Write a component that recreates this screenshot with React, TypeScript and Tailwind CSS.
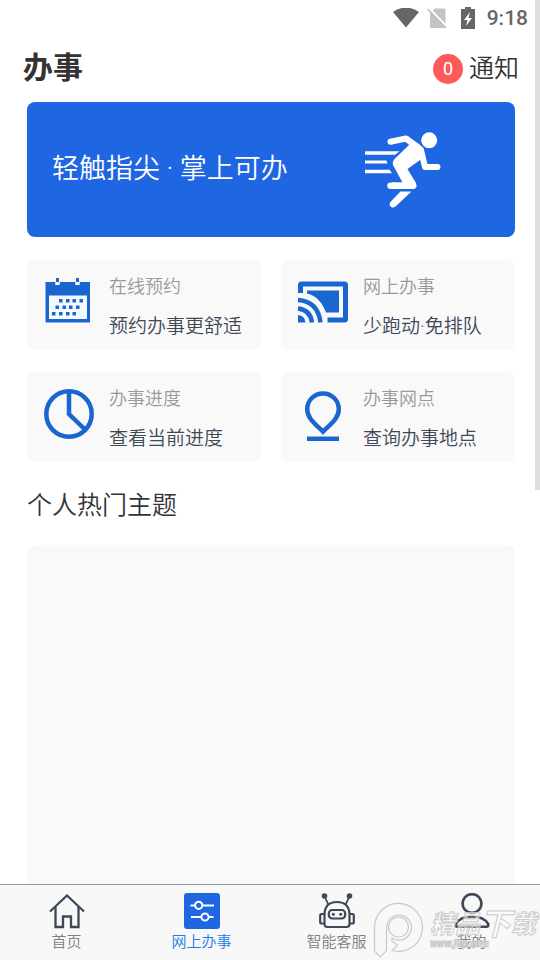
import React, { useState } from 'react';

interface Service {
  title: string;
  text: string;
  icon: React.ReactNode;
}

interface Tab {
  name: string;
  icon: React.ReactNode;
}

const CalendarIcon = () => (
  <svg viewBox="0 0 54 54" className="w-[54px] h-[54px]" fill="#1a66d0">
    <path d="M4.500 8h10v3h4V8h16v3h4V8h10.500v40.500h-44.500z" />
    <path d="M8 21.500h38v23.500H8z" fill="#f5faff" />
    <path d="M15 4h3v4h-3zM35 4h3v4h-3z" />
    <path d="M14.500 8h4v3h-4zM34.500 8h4v3h-4z" fill="#f5faff" />
    {[18, 25, 31.5, 38.5].map((x) => (
      <rect key={x} x={x} y="25" width="3.500" height="3.500" />
    ))}
    {[14.5, 21.5, 28, 35].map((x) => (
      <rect key={x} x={x} y="31.500" width="3.500" height="3.500" />
    ))}
    {[11, 18, 25, 31.5].map((x) => (
      <rect key={x} x={x} y="38" width="3.500" height="3.500" />
    ))}
  </svg>
);

const CastIcon = () => (
  <svg viewBox="0 0 54 54" className="w-[54px] h-[54px]" fill="#1a66d0">
    <path d="M3 19v-8q0-3.500 3.500-3.500h43q3.500 0 3.500 3.500v34q0 3.500-3.500 3.500H32.500v-5H48V12.500H8V19z" />
    <path d="M12 16.500h32v22H31C27 28 21.500 22 12 19.500z" />
    <g fill="none" stroke="#1a66d0" strokeWidth="4.500">
      <path d="M3 26Q23 27.500 25.500 48.500" />
      <path d="M3 34.500Q15.500 36 17 48.500" />
    </g>
    <path d="M3 41q7 .5 7.500 7.500H3z" />
  </svg>
);

const ProgressIcon = () => (
  <svg
    viewBox="0 0 54 54"
    className="w-[54px] h-[54px]"
    fill="none"
    stroke="#1a66d0"
    strokeWidth="4.500"
  >
    <circle cx="28" cy="28" r="22.700" />
    <path d="M28 5v23l16 15.500" />
  </svg>
);

const PlaceIcon = () => (
  <svg viewBox="0 0 54 54" className="w-[54px] h-[54px] overflow-visible" fill="none">
    <path
      d="M28 45.700C20 37.700 12.200 32.200 12.200 23.200a15.800 15.800 0 0 1 31.600 0C43.800 32.200 36 37.700 28 45.700z"
      stroke="#1a66d0"
      strokeWidth="4.500"
    />
    <path d="M12 50.500h32v4.500H12z" fill="#1a66d0" />
  </svg>
);

const RunnerIcon = () => (
  <svg
    viewBox="0 0 80 80"
    className="w-[80px] h-[80px]"
    fill="#fff"
    stroke="none"
    strokeLinecap="round"
    strokeLinejoin="round"
  >
    <circle cx="67.200" cy="10.300" r="8" />
    <path
      d="M28.500 11.800L44 8.500L59 20L63 37H75.500"
      fill="none"
      stroke="#fff"
      strokeWidth="6"
    />
    <path d="M45 6L57 14Q61.500 18 62.500 24V29.500L58 30L45.500 39L54 53Q56 59 50.500 59H30V52.500H40.500L31 35Q30 31.500 33 28.500L47 15z" />
    <path d="M28.500 55.700H50" fill="none" stroke="#fff" strokeWidth="6.500" />
    <path d="M38.500 61.500H49.500L33.500 76.500Q30.500 78.500 28.500 76.500Q26.500 74 28.800 71.500z" />
    <path d="M3 21.200H37.500L33 24.700H3zM3 30.500H24.500L25.500 33.500H3zM3 39.800H27.500L30 43.300H3z" />
  </svg>
);

const HomeIcon = () => (
  <svg
    viewBox="0 0 36 36"
    className="w-9 h-9"
    fill="none"
    stroke="#3e4857"
    strokeWidth="2.300"
  >
    <path d="M1 18.500L18 2.500L35 18.500" />
    <path d="M6.500 14v20h7.500V23.500h8V34h7.500V14" />
  </svg>
);

const ServiceIcon = () => (
  <svg viewBox="0 0 36 36" className="w-9 h-9" fill="none" stroke="#fff" strokeWidth="2">
    <rect width="36" height="36" rx="3" fill="#1f66e3" stroke="none" />
    <path d="M6.500 12.500H11M18.500 12.500H30M7 24H17M24.500 24H29.500" />
    <circle cx="14.700" cy="12.300" r="3.600" />
    <circle cx="21" cy="24" r="3.600" />
  </svg>
);

const RobotIcon = () => (
  <svg
    viewBox="0 0 36 36"
    className="w-9 h-9"
    fill="none"
    stroke="#3e4857"
    strokeWidth="2.200"
  >
    <path d="M5.500 3L9.500 12M30.500 3L26.500 12" strokeWidth="1.800" />
    <circle cx="5.500" cy="3" r="2.800" fill="#3e4857" stroke="none" />
    <circle cx="30.500" cy="3" r="2.800" fill="#3e4857" stroke="none" />
    <path d="M5.500 22Q5.500 9 18 9T30.500 22V31Q30.500 34 27.500 34H8.500Q5.500 34 5.500 31z" />
    <path d="M5.500 21H2.500Q1.200 21 1.200 22.500V29Q1.200 30.500 2.500 30.500H5.500M30.500 21H33.500Q34.800 21 34.800 22.500V29Q34.800 30.500 33.500 30.500H30.500" />
    <rect x="9.800" y="17" width="16.400" height="8.500" rx="3.500" />
    <circle cx="14.300" cy="21.300" r="1.500" fill="#3e4857" stroke="none" />
    <circle cx="21.700" cy="21.300" r="1.500" fill="#3e4857" stroke="none" />
  </svg>
);

const UserIcon = () => (
  <svg
    viewBox="0 0 36 36"
    className="w-9 h-9"
    fill="none"
    stroke="#3e4857"
    strokeWidth="2.600"
    strokeLinejoin="round"
  >
    <circle cx="18" cy="10.500" r="9.400" />
    <path d="M1.800 31C5 25.500 11 23.500 18 23.500S31 25.500 34.200 31Q34.800 33.700 32.500 33.700H3.500Q1.200 33.700 1.800 31z" />
  </svg>
);

const services: Service[] = [
  { title: '在线预约', text: '预约办事更舒适', icon: <CalendarIcon /> },
  { title: '网上办事', text: '少跑动·免排队', icon: <CastIcon /> },
  { title: '办事进度', text: '查看当前进度', icon: <ProgressIcon /> },
  { title: '办事网点', text: '查询办事地点', icon: <PlaceIcon /> },
];

const tabs: Tab[] = [
  { name: '首页', icon: <HomeIcon /> },
  { name: '网上办事', icon: <ServiceIcon /> },
  { name: '智能客服', icon: <RobotIcon /> },
  { name: '我的', icon: <UserIcon /> },
];

const StatusBar = () => (
  <div className="flex h-9 shrink-0 items-center justify-end pr-3 text-[#666]">
    <svg viewBox="0 0 26 20" className="mr-2 w-[26px] h-5" fill="#666">
      <path d="M0 4Q13-5 26 4L13 19.500z" />
    </svg>
    <svg viewBox="0 0 20 22" className="mr-3.5 w-5 h-[22px]">
      <path d="M8 1.500H17Q18.500 1.500 18.500 3V21H3V7z" fill="#c4c4c4" />
      <path d="M1 1L20 20" stroke="#fff" strokeWidth="3" />
      <path d="M.5 2L19 21" stroke="#bbb" strokeWidth="1.500" />
    </svg>
    <svg viewBox="0 0 14 22" className="mr-3 w-3.5 h-[22px]">
      <path d="M4 0h6v2h4v20H0V2h4z" fill="#666" />
      <path d="M9 5L3 13h3.500L5 19L11 11H7.500z" fill="#fff" />
    </svg>
    <span className="text-[21px] leading-6 font-medium">9:18</span>
  </div>
);

const Watermark = () => (
  <div className="pointer-events-none absolute right-0 bottom-0 flex h-[60px] w-[168px] font-['Noto_Sans_CJK_SC',sans-serif]">
    <svg
      viewBox="0 0 54 60"
      className="w-[54px] h-[60px] shrink-0"
      fill="none"
      stroke="#c9c9c9"
      strokeWidth="1.200"
    >
      <path d="M2.500 51V26.500A24 24 0 1 1 20 50.500L25.500 45L20 41V38A12.500 12.500 0 1 0 14.500 28V50.500L8.500 57z" />
      <circle cx="26.500" cy="27" r="10" />
    </svg>
    <div className="flex flex-1 flex-col pt-2 pl-1 italic">
      <span className="flex h-7 items-center whitespace-nowrap text-[25px] leading-7 font-bold text-white/50 [-webkit-text-stroke:1px_#ccc]">
        精品<span className="text-[31px]">下</span>载
      </span>
      <span className="font-[Roboto,sans-serif] text-[10px] leading-4 font-bold text-white/60 [-webkit-text-stroke:1px_#ccc]">
        www.j9p.com
      </span>
    </div>
  </div>
);

const App: React.FC = () => {
  const [active, setActive] = useState<string>('网上办事');

  return (
    <div className="relative flex h-screen flex-col overflow-hidden bg-white font-[Roboto,'Noto_Sans_CJK_SC_DemiLight','Noto_Sans_CJK_SC',sans-serif] font-[350] text-[#333]">
      <StatusBar />
      <header className="flex h-[66px] shrink-0 items-center justify-between pr-[21px] pb-px pl-[23px]">
        <h1 className="pb-0.5 font-[Roboto,'Noto_Sans_CJK_SC',sans-serif] text-[30px] leading-9 font-bold">
          办事
        </h1>
        <button className="flex items-center gap-1.5 text-[25px] leading-8">
          <span className="flex size-[30px] items-center justify-center rounded-full bg-[#ff5a5a] text-lg font-normal text-white">
            0
          </span>
          通知
        </button>
      </header>

      <main className="flex min-h-0 flex-1 flex-col pr-[25px] pl-[27px]">
        <button className="flex h-[135px] shrink-0 items-center justify-between rounded-lg bg-[#1f66e3] pr-[73px] pl-[25px] text-[27px] text-white">
          <span>轻触指尖 · 掌上可办</span>
          <RunnerIcon />
        </button>

        <div className="mt-[23px] grid shrink-0 grid-cols-2 gap-x-5 gap-y-[22px]">
          {services.map((item) => (
            <button
              key={item.title}
              className="flex h-[90px] items-start rounded-lg bg-[#f9f9f9] pt-3.5 pl-3.5 text-left"
            >
              {item.icon}
              <span className="ml-3.5 flex flex-col gap-3.5 pt-px">
                <span className="text-lg leading-6 text-[#999]">{item.title}</span>
                <span className="whitespace-nowrap text-[19px] leading-7 text-[#3e4857]">
                  {item.text}
                </span>
              </span>
            </button>
          ))}
        </div>

        <h2 className="mt-[26px] shrink-0 text-[25px] leading-9">个人热门主题</h2>
        <section className="mt-[21px] flex-1 rounded-t-lg bg-[#f9f9f9]"></section>
      </main>

      <nav className="grid h-[76px] shrink-0 grid-cols-4 border-t border-[#999] bg-[#f8f8f8]">
        {tabs.map((tab) => (
          <button
            key={tab.name}
            onClick={() => setActive(tab.name)}
            className={
              'flex flex-col items-center gap-px pt-2 pr-0.5 text-[15px] leading-6 ' +
              (active === tab.name ? 'text-[#1f7bea]' : 'text-[#808080]')
            }
          >
            {tab.icon}
            {tab.name}
          </button>
        ))}
      </nav>

      {/* scroll indicator */}
      <div className="absolute top-0 right-0 h-[51%] w-[5px] bg-[#dedede]"></div>
      <Watermark />
    </div>
  );
};

export default App;
